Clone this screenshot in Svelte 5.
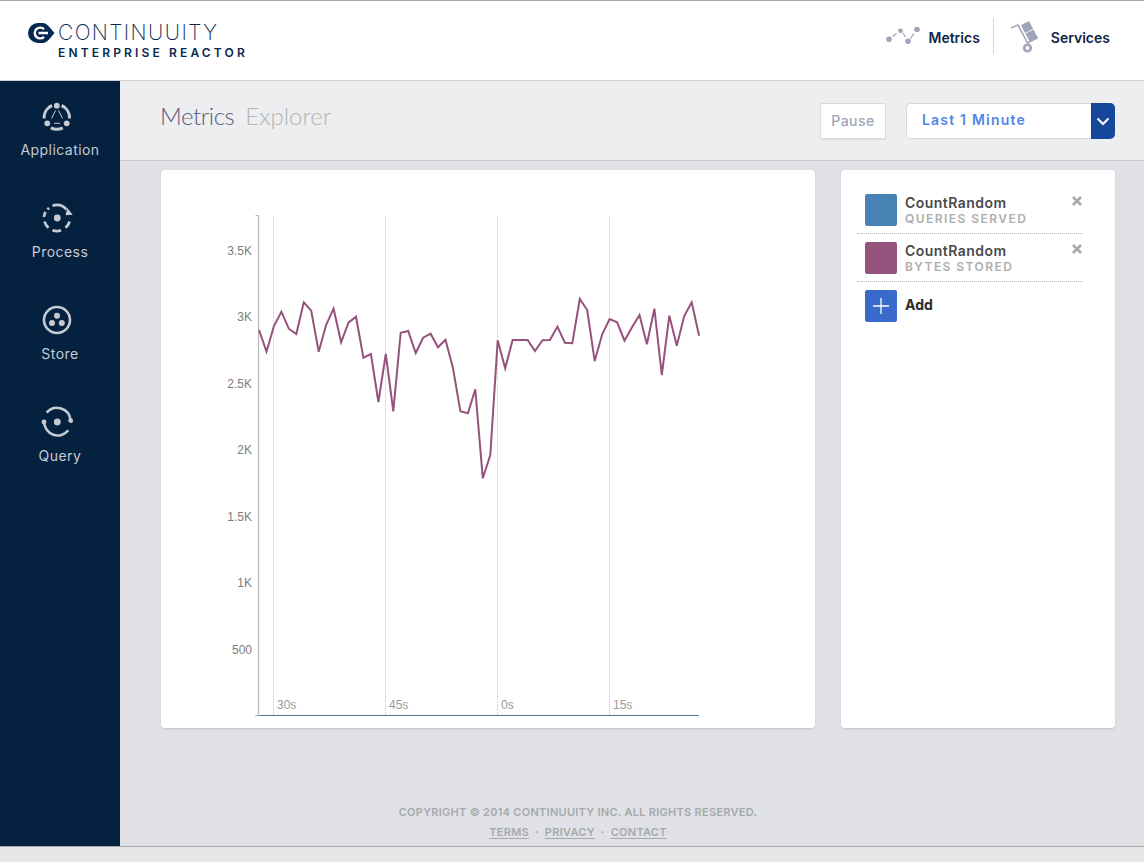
<script>
  const pts = [[330,0],[351.7],[326],[311.7],[328.7],[334],[302.3],[310.7],[351.7],[325],[308.7],[342.3],[322.7],[316.7],[357.7],[354],[402],[354],[411.3],[332.7],[331],[353],[337.7],[333.7],[347.3],[339.7],[368.3],[411.3],[413.3],[389.3],[478.3],[455],[340.3],[368.3],[340],[340],[340],[351],[340.3],[340],[326.7],[342.7],[343.3],[299],[310],[361],[334.3],[319],[322.3],[340.7],[327.3],[315],[344.3],[308.7],[375],[315.7],[345.7],[316],[302.3],[335.7]];
  const line = pts.map((p, i) => `${(259 + i * 7.46).toFixed(1)},${p[0]}`).join(' ');
  const yTicks = [['3.5K',255],['3K',321],['2.5K',388],['2K',454],['1.5K',521],['1K',587],['500',654]];
  const xTicks = [[273.5,'30s'],[385.5,'45s'],[497.5,'0s'],[609.5,'15s']];
  const legend = [
    { color: '#4682b4', name: 'CountRandom', sub: 'QUERIES SERVED' },
    { color: '#95527c', name: 'CountRandom', sub: 'BYTES STORED' }
  ];
  const nav = ['Application', 'Process', 'Store', 'Query'];
</script>

<div class="page">
  <header class="top">
    <div class="logo">
      <svg class="logo-mark" width="27" height="20" viewBox="0 0 27 20">
        <path d="M10 0 H15 C19 0 23 6 26.5 10 C23 14 19 20 15 20 H10 A10 10 0 0 1 10 0 Z" fill="#06274e"/>
        <path d="M16 6.2 A5.4 5.4 0 1 0 16 13.8 M10.5 10 H20" fill="none" stroke="#fff" stroke-width="2.4"/>
      </svg>
      <div class="logo-text">
        <div class="logo-name">CONTINUUITY</div>
        <div class="logo-sub">ENTERPRISE REACTOR</div>
      </div>
    </div>
    <nav class="topnav">
      <a class="tn tn-metrics">
        <svg width="36" height="18" viewBox="0 0 36 18" fill="#a0a4b8" stroke="#a0a4b8">
          <circle cx="4" cy="12.2" r="2.8" stroke="none"/>
          <circle cx="15.5" cy="3.8" r="2.4" stroke="none"/>
          <circle cx="23" cy="14.2" r="2.8" stroke="none"/>
          <circle cx="32" cy="2.5" r="2.8" stroke="none"/>
          <path d="M7.5 9.5 L11.5 6.5 M18 6 L20.5 10 M25.5 11.5 L29 6.5" stroke-width="1.3" fill="none"/>
        </svg>
        <span>Metrics</span>
      </a>
      <a class="tn tn-services">
        <svg width="30" height="34" viewBox="0 0 30 34">
          <path d="M1 9 L8 6 L17.5 24 L28 18.5" fill="none" stroke="#a0a4b8" stroke-width="1.6"/>
          <circle cx="17.5" cy="29" r="3.3" fill="none" stroke="#a0a4b8" stroke-width="2.6"/>
          <rect x="12.5" y="3.5" width="9" height="9" transform="rotate(-28 17 8)" fill="#a0a4b8"/>
          <rect x="17" y="12" width="9" height="9" transform="rotate(-28 21.5 16.5)" fill="#a0a4b8"/>
        </svg>
        <span>Services</span>
      </a>
    </nav>
  </header>

  <div class="body">
    <aside class="side">
      {#each nav as n, i}
        <a class="side-item">
          <svg width="32" height="32" viewBox="0 0 32 32" fill="#c6cbd3" stroke="#c6cbd3">
            {#if i === 0}
              <circle cx="15.8" cy="5.7" r="2.9" stroke="none"/>
              <circle cx="6.3" cy="23.3" r="2.9" stroke="none"/>
              <circle cx="25.7" cy="23.3" r="2.9" stroke="none"/>
              <path d="M11 5.5 A13 13 0 0 0 3.2 18.5 M20.6 5.5 A13 13 0 0 1 28.4 18.5 M9.8 27.8 A13 13 0 0 0 21.8 27.8" fill="none" stroke-width="3"/>
              <path d="M14.5 10.5 L10.5 18.5 M17.5 10.5 L21.5 18.5 M13 23.3 H19" fill="none" stroke-width="1" />
            {:else if i === 1}
              <circle cx="16.3" cy="16" r="3.4" stroke="none"/>
              <path d="M11.5 3.8 A13 13 0 0 1 25.5 7.5 M28.6 19.5 A13 13 0 0 1 24.5 25.8 M20 28.4 A13 13 0 0 1 11.5 28.2 M7.5 25.8 A13 13 0 0 1 3.5 19.5 M3 15 A13 13 0 0 1 4.5 10 M6.5 7.5 A13 13 0 0 1 8 6" fill="none" stroke-width="2.7"/>
              <path d="M31.7 12.7 L26.3 6 L24.5 13.3 Z" stroke="none"/>
            {:else if i === 2}
              <circle cx="16" cy="16" r="13" fill="none" stroke-width="2.6"/>
              <circle cx="16" cy="11.8" r="3" stroke="none"/>
              <circle cx="11" cy="19" r="3" stroke="none"/>
              <circle cx="20.8" cy="19" r="3" stroke="none"/>
            {:else}
              <circle cx="16.3" cy="16" r="3.4" stroke="none"/>
              <path d="M5.7 6.7 A13.5 13.5 0 0 1 29.5 14" fill="none" stroke-width="2.6"/>
              <path d="M3.2 16 A13.5 13.5 0 0 0 27.3 24.3" fill="none" stroke-width="2.6"/>
              <circle cx="29.7" cy="14.6" r="2.4" stroke="none"/>
              <circle cx="3" cy="16" r="2.4" stroke="none"/>
            {/if}
          </svg>
          <span>{n}</span>
        </a>
      {/each}
    </aside>

    <main class="main">
      <div class="sub">
        <h1 class="title"><span class="t1">Metrics</span><span class="t2">Explorer</span></h1>
        <div class="controls">
          <button class="pause">Pause</button>
          <div class="select">
            <span class="sel-label">Last 1 Minute</span>
            <span class="sel-arrow">
              <svg width="14" height="9" viewBox="0 0 14 9"><path d="M1.5 1.5 L7 7 L12.5 1.5" fill="none" stroke="#fff" stroke-width="2"/></svg>
            </span>
          </div>
        </div>
      </div>

      <div class="content">
        <section class="card chart">
          <svg width="654" height="558" viewBox="161 170 654 558">
            {#each xTicks as t}
              <line x1={t[0]} x2={t[0]} y1="216" y2="715" stroke="#c4c4c4" stroke-dasharray="1 1"/>
              <text class="xt" x={t[0] + 3.5} y="709">{t[1]}</text>
            {/each}
            <path d="M259 215.5 H255.5 M255 715.5 H259" fill="none" stroke="#b9b9b9" stroke-width="1"/>
            <line x1="258.5" y1="215.5" x2="258.5" y2="715.5" stroke="#b9b9b9" stroke-width="1.2"/>
            <line x1="259" x2="699" y1="715.5" y2="715.5" stroke="#4b7ba5"/>
            {#each yTicks as t}
              <text class="yt" x="252" y={t[1]} text-anchor="end">{t[0]}</text>
            {/each}
            <polyline points={line} fill="none" stroke="#95527c" stroke-width="2"/>
          </svg>
        </section>
        <section class="card list">
          {#each legend as l}
            <div class="row">
              <div class="swatch" style="background:{l.color}"></div>
              <div class="row-text">
                <div class="row-name">{l.name}</div>
                <div class="row-sub">{l.sub}</div>
              </div>
              <svg class="close" width="10" height="10" viewBox="0 0 10 10"><path d="M1 1 L9 9 M9 1 L1 9" stroke="#a9a9a9" stroke-width="2.6"/></svg>
            </div>
          {/each}
          <div class="add">
            <div class="swatch add-sw">
              <svg width="16" height="16" viewBox="0 0 16 16"><path d="M8 0 V16 M0 8 H16" stroke="#fff" stroke-width="1.3"/></svg>
            </div>
            <span>Add</span>
          </div>
        </section>
      </div>

      <footer class="foot">
        <div>COPYRIGHT © 2014 CONTINUUITY INC. ALL RIGHTS RESERVED.</div>
        <div class="links"><a>TERMS</a><i>·</i><a>PRIVACY</a><i>·</i><a>CONTACT</a></div>
      </footer>
    </main>
  </div>
  <div class="strip"></div>
</div>

<style>
  :global(body) { margin: 0; background: #e0e1e6; }
  .page { width: 1144px; height: 862px; display: flex; flex-direction: column; font-family: Inter, "Liberation Sans", sans-serif; overflow: hidden; }
  .top { height: 79px; flex: none; background: #fff; border-top: 1px solid #aaa; border-bottom: 1px solid #cdcfd2; display: flex; justify-content: space-between; align-items: flex-start; }
  .logo { display: flex; margin: 22px 0 0 28px; }
  .logo-mark { flex: none; margin-right: 3px; }
  .logo-text { color: #06274e; }
  .logo-name { font-family: Inter, sans-serif; font-weight: 200; font-size: 21px; line-height: 20px; letter-spacing: 1.4px; white-space: nowrap; }
  .logo-sub { font-size: 12px; line-height: 14px; margin-top: 3px; font-weight: 600; letter-spacing: 3.15px; white-space: nowrap; }
  .topnav { display: flex; align-items: center; margin: 17px 34px 0 0; }
  .tn { display: flex; align-items: center; font-size: 14px; font-weight: 600; color: #0e2445; }
  .tn span { position: relative; top: 1px; }
  .tn-metrics { gap: 7px; padding-right: 13px; height: 36px; border-right: 1px solid #d4d4d4; }
  .tn-services { gap: 11px; padding-left: 16px; }
  .body { flex: 1; display: flex; min-height: 0; }
  .side { width: 120px; flex: none; background: #04213f; display: flex; flex-direction: column; }
  .side-item { height: 102px; display: flex; flex-direction: column; align-items: center; padding-top: 19px; box-sizing: border-box; color: #c6cbd3; font-size: 14px; letter-spacing: .45px; }
  .side-item svg { margin-left: -6px; margin-bottom: 9px; }
  .side-item span { line-height: 17px; }
  .main { flex: 1; display: flex; flex-direction: column; min-width: 0; background: #e0e1e6; }
  .sub { height: 79px; flex: none; background: #eceef0; border-bottom: 1px solid #c9cbcf; display: flex; justify-content: space-between; }
  .title { margin: 20px 0 0 41px; font-family: Lato, sans-serif; font-weight: 300; font-size: 24px; line-height: 30px; }
  .t1 { color: #5d5a7c; letter-spacing: -.45px; margin-left: -1px; }
  .t2 { color: #b3b5b7; margin-left: 11px; }
  .controls { display: flex; gap: 20px; margin: 22px 29px 0 0; align-items: flex-start; }
  .pause { width: 66px; height: 36px; padding: 0 0 2px; background: #fff; border: 1px solid #d9dadc; font: 500 14px Inter, sans-serif; letter-spacing: .5px; color: #a0a4b8; box-shadow: 0 1px 1px #0000000d; }
  .select { width: 209px; height: 36px; box-sizing: border-box; background: #fff; box-shadow: inset 0 0 0 1px #d5d7da; border-radius: 5px; display: flex; justify-content: space-between; overflow: hidden; }
  .sel-label { padding-left: 16px; line-height: 33px; color: #4f86ea; font-size: 14px; font-weight: 600; letter-spacing: 1.2px; }
  .sel-arrow { width: 24px; background: #17479a; display: flex; align-items: center; justify-content: center; }
  .content { display: flex; gap: 26px; padding: 9px 29px 0 41px; }
  .card { background: #fff; border-radius: 4px; height: 558px; box-shadow: 0 1px 2px #00000022; }
  .chart { width: 654px; }
  .chart svg { display: block; }
  .yt { font: 12px "Liberation Sans", sans-serif; fill: #7b7b7b; }
  .xt { font: 12px "Liberation Sans", sans-serif; fill: #9a9a9a; }
  .list { width: 274px; padding: 16px 0 0 16px; box-sizing: border-box; }
  .row { width: 226px; height: 48px; box-sizing: border-box; padding: 8px 0 0 8px; border-bottom: 1px dotted #bdbdbd; display: flex; position: relative; }
  .swatch { width: 32px; height: 32px; border-radius: 2px; flex: none; }
  .row-text { margin-left: 8px; }
  .row-name { font-size: 14px; font-weight: 600; color: #4a4a4a; line-height: 17px; letter-spacing: .45px; }
  .row-sub { font-size: 12px; font-weight: 600; color: #adadad; letter-spacing: 1.45px; line-height: 15px; }
  .close { position: absolute; right: 1px; top: 10px; }
  .add { display: flex; padding: 8px 0 0 8px; align-items: flex-start; font-size: 14px; font-weight: 700; color: #2b2b2b; }
  .add span { margin: 6px 0 0 8px; line-height: 17px; }
  .add-sw { background: #386bcb; display: flex; align-items: center; justify-content: center; }
  .foot { width: 916px; margin-top: auto; padding-bottom: 4px; text-align: center; font-size: 11px; font-weight: 600; color: #a6a9ab; line-height: 20px; letter-spacing: .28px; }
  .links a { text-decoration: underline; text-underline-offset: 2px; }
  .links i { font-style: normal; margin: 0 6px; }
  .strip { height: 15px; flex: none; border-top: 1px solid #adadad; background: #e7e7e7; }
</style>
